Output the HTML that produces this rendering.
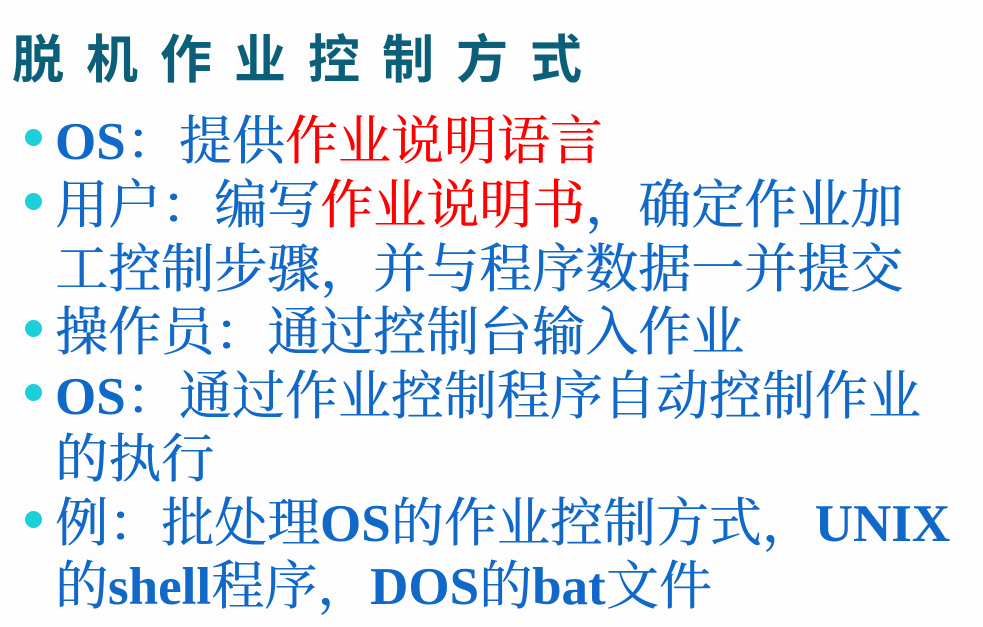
<!DOCTYPE html>
<html><head><meta charset="utf-8"><style>
html,body{margin:0;padding:0;width:983px;height:627px;overflow:hidden;background:#fdfdfd}
.t{position:absolute;left:12px;top:24px;font:bold 52px "Noto Sans CJK SC",sans-serif;color:#0b5f78;letter-spacing:22px;line-height:64px;white-space:nowrap}
.l{position:absolute;left:55px;font:53px "Liberation Serif","Noto Serif CJK SC",serif;color:#1068c8;line-height:64px;white-space:nowrap;text-shadow:0.6px 0 0 #1068c8}
.l b{font-family:"Liberation Serif",serif;font-weight:bold;text-shadow:none}
.r{color:#f00;text-shadow:0.6px 0 0 #f00}
.d{position:absolute;left:25px;width:17px;height:17px;border-radius:50%;background:#1ccfd8}
</style></head><body>
<div class="t">脱机作业控制方式</div>
<div class="d" style="top:129px"></div><div class="l" style="top:110px"><b>OS</b>：提供<span class="r">作业说明语言</span></div>
<div class="d" style="top:193px"></div><div class="l" style="top:174px">用户：编写<span class="r">作业说明书</span>，确定作业加</div>
<div class="l" style="top:238px">工控制步骤，并与程序数据一并提交</div>
<div class="d" style="top:320px"></div><div class="l" style="top:301px">操作员：通过控制台输入作业</div>
<div class="d" style="top:384px"></div><div class="l" style="top:365px"><b>OS</b>：通过作业控制程序自动控制作业</div>
<div class="l" style="top:428px">的执行</div>
<div class="d" style="top:511px"></div><div class="l" style="top:492px">例：批处理<b>OS</b>的作业控制方式，<b>UNIX</b></div>
<div class="l" style="top:555px">的<b>shell</b>程序，<b>DOS</b>的<b>bat</b>文件</div>
</body></html>
